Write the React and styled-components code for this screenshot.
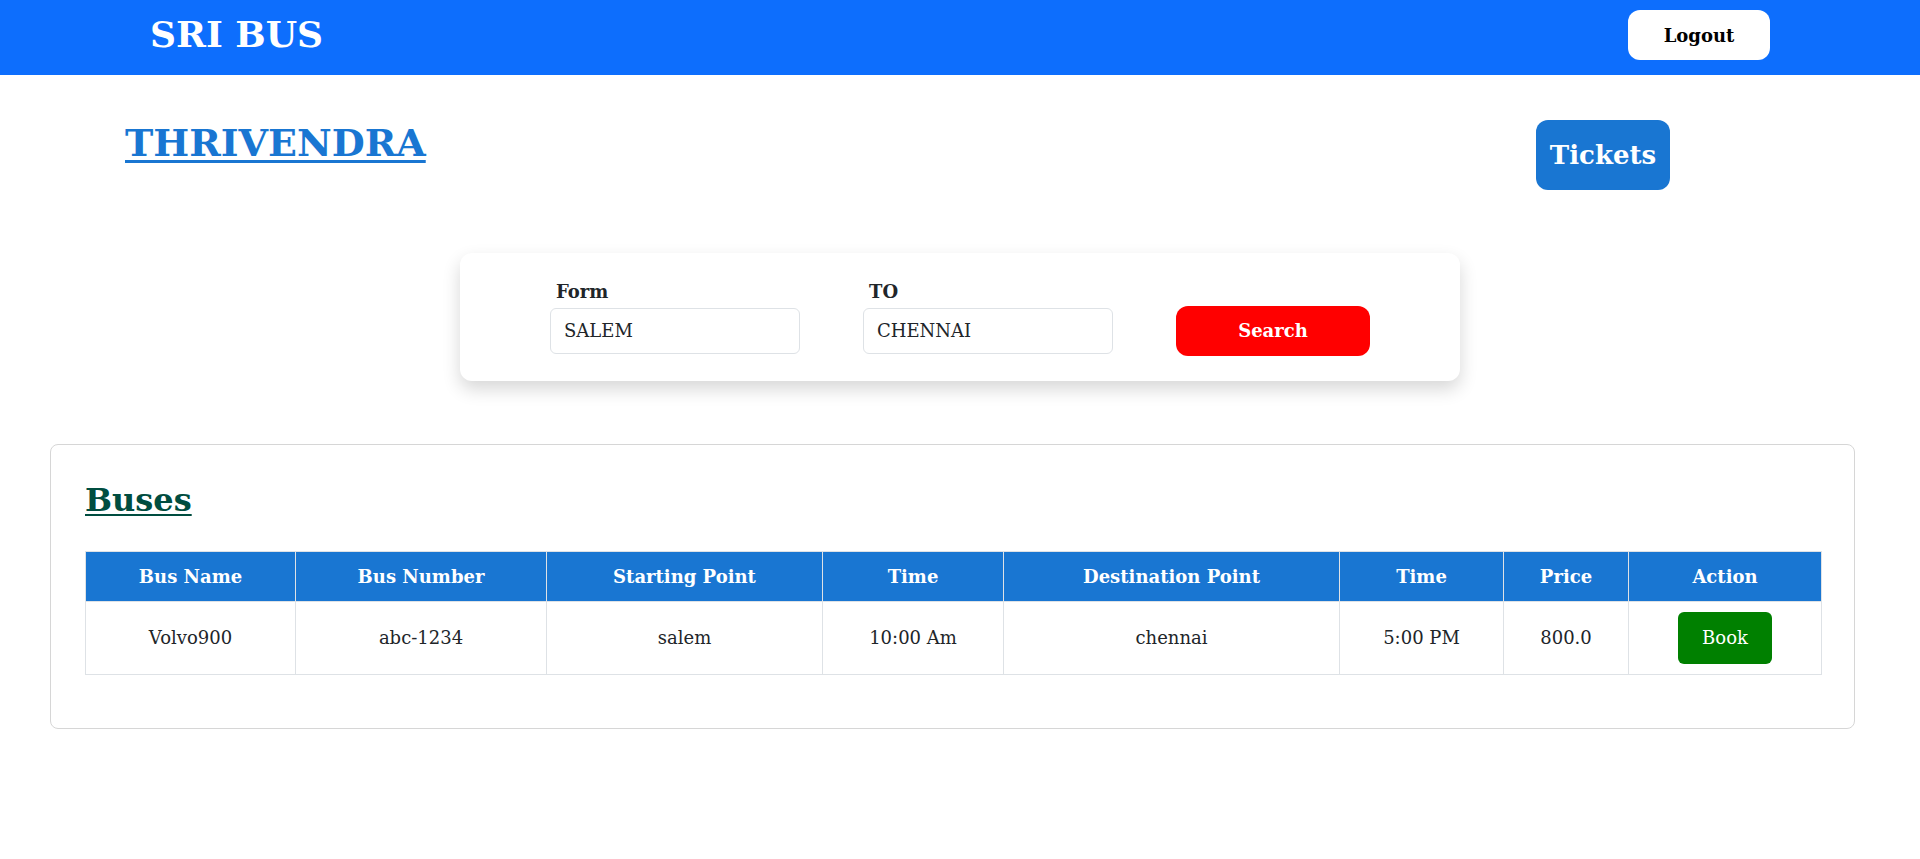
import React from 'react';
import styled, { createGlobalStyle } from 'styled-components';

const GlobalStyle = createGlobalStyle`
  body {
    margin: 0;
    background: #ffffff;
    font-family: "DejaVu Serif", Georgia, serif;
    color: #212529;
  }
  * {
    box-sizing: border-box;
  }
`;

const NavBar = styled.nav`
  height: 75px;
  background: #0d6efd;
  display: flex;
  justify-content: space-between;
  align-items: flex-start;
  padding: 10px 150px 0;
`;

const Brand = styled.h1`
  margin: 3px 0 0;
  color: #ffffff;
  font-size: 36px;
  font-weight: bold;
  line-height: 1.2;
`;

const LogoutButton = styled.button`
  width: 142px;
  height: 50px;
  border: none;
  border-radius: 12px;
  background: #ffffff;
  color: #000000;
  font-family: inherit;
  font-size: 18px;
  font-weight: bold;
  cursor: pointer;
`;

const UserRow = styled.div`
  display: flex;
  justify-content: space-between;
  align-items: flex-start;
  padding: 45px 250px 0 125px;
`;

const UserName = styled.h1`
  margin: 0;
  color: #1976d2;
  font-size: 38px;
  font-weight: bold;
  line-height: 1.2;
  text-decoration: underline;
  text-decoration-thickness: 3px;
  text-underline-offset: 4px;
`;

const TicketsButton = styled.button`
  width: 134px;
  height: 70px;
  border: none;
  border-radius: 12px;
  background: #1976d2;
  color: #ffffff;
  font-family: inherit;
  font-size: 26px;
  font-weight: bold;
  cursor: pointer;
`;

const SearchCard = styled.div`
  width: 1000px;
  margin: 63px auto 0;
  padding: 28px 0 27px;
  background: #ffffff;
  border-radius: 12px;
  box-shadow: 0 8px 18px rgba(0, 0, 0, 0.16);
  display: flex;
  justify-content: center;
  align-items: flex-end;
  gap: 63px;
`;

const Field = styled.div`
  display: flex;
  flex-direction: column;
`;

const Label = styled.label`
  font-size: 18px;
  font-weight: bold;
  line-height: 1.2;
  color: #212529;
  padding-left: 6px;
  margin-bottom: 5px;
`;

const Input = styled.input`
  width: 250px;
  height: 46px;
  border: 1px solid #dee2e6;
  border-radius: 6px;
  padding: 0 13px;
  font-family: inherit;
  font-size: 18px;
  color: #212529;
  background: #ffffff;
  outline: none;
`;

const SearchButton = styled.button`
  width: 194px;
  height: 50px;
  margin-bottom: -2px;
  border: none;
  border-radius: 12px;
  background: #ff0000;
  color: #ffffff;
  font-family: inherit;
  font-size: 18px;
  font-weight: bold;
  cursor: pointer;
`;

const BusesCard = styled.section`
  width: 1805px;
  margin: 63px 0 0 50px;
  padding: 36px 34px 53px;
  border: 1px solid #d6d6d6;
  border-radius: 8px;
`;

const BusesTitle = styled.h2`
  margin: 0 0 32px;
  color: #004d40;
  font-size: 32px;
  font-weight: bold;
  line-height: 1.2;
  text-decoration: underline;
  text-decoration-thickness: 2px;
  text-underline-offset: 3px;
`;

const Table = styled.table`
  width: 100%;
  border-collapse: collapse;
  table-layout: fixed;
  text-align: center;
`;

const HeadCell = styled.th`
  height: 50px;
  padding: 0 8px;
  background: #1976d2;
  color: #ffffff;
  font-size: 18px;
  font-weight: bold;
  border: 1px solid #dee2e6;
`;

const Cell = styled.td`
  height: 73px;
  padding: 0 8px;
  font-size: 18px;
  color: #212529;
  border: 1px solid #dee2e6;
`;

const BookButton = styled.button`
  width: 94px;
  height: 52px;
  border: none;
  border-radius: 6px;
  background: #008000;
  color: #ffffff;
  font-family: inherit;
  font-size: 18px;
  cursor: pointer;
`;

const columns = [
  { title: 'Bus Name', width: 210 },
  { title: 'Bus Number', width: 251 },
  { title: 'Starting Point', width: 276 },
  { title: 'Time', width: 181 },
  { title: 'Destination Point', width: 336 },
  { title: 'Time', width: 164 },
  { title: 'Price', width: 125 },
  { title: 'Action', width: 193 },
];

const buses = [
  {
    name: 'Volvo900',
    number: 'abc-1234',
    from: 'salem',
    start: '10:00 Am',
    to: 'chennai',
    end: '5:00 PM',
    price: '800.0',
  },
];

const App = () => (
  <>
    <GlobalStyle />
    <NavBar>
      <Brand>SRI BUS</Brand>
      <LogoutButton>Logout</LogoutButton>
    </NavBar>

    <UserRow>
      <UserName>THRIVENDRA</UserName>
      <TicketsButton>Tickets</TicketsButton>
    </UserRow>

    <SearchCard>
      <Field>
        <Label>Form</Label>
        <Input defaultValue="SALEM" />
      </Field>
      <Field>
        <Label>TO</Label>
        <Input defaultValue="CHENNAI" />
      </Field>
      <SearchButton>Search</SearchButton>
    </SearchCard>

    <BusesCard>
      <BusesTitle>Buses</BusesTitle>
      <Table>
        <colgroup>
          {columns.map((c, i) => <col key={i} style={{ width: c.width }} />)}
        </colgroup>
        <thead>
          <tr>
            {columns.map((c, i) => <HeadCell key={i}>{c.title}</HeadCell>)}
          </tr>
        </thead>
        <tbody>
          {buses.map((b) => (
            <tr key={b.number}>
              <Cell>{b.name}</Cell>
              <Cell>{b.number}</Cell>
              <Cell>{b.from}</Cell>
              <Cell>{b.start}</Cell>
              <Cell>{b.to}</Cell>
              <Cell>{b.end}</Cell>
              <Cell>{b.price}</Cell>
              <Cell><BookButton>Book</BookButton></Cell>
            </tr>
          ))}
        </tbody>
      </Table>
    </BusesCard>
  </>
);

export default App;
